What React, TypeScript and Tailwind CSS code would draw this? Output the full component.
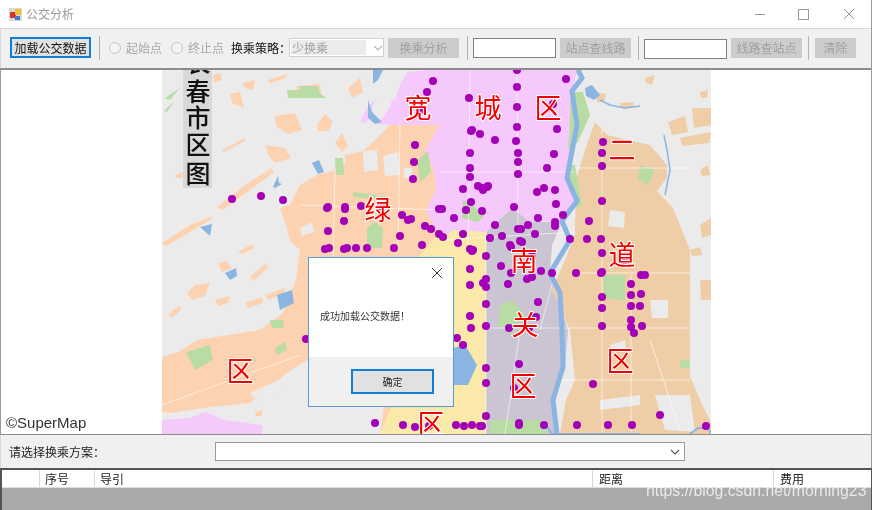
const dots: [number, number][] = [
[433,81],[427,92],[420,110],[415,145],[414,162],[413,179],[232,199],[261,196],[283,200],[328,207],[327,208],[345,207],[345,209],[361,206],[381,206],[402,215],[408,220],[411,219],[425,226],[431,229],[439,234],[344,221],[328,231],[400,236],[422,245],[325,249],[329,248],[344,249],[347,248],[356,248],[367,248],[394,248],[439,209],
[517,70],[566,79],[517,87],[469,98],[517,107],[553,104],[517,127],[557,129],[472,130],[471,131],[480,134],[495,140],[516,141],[603,142],[602,153],[602,166],[470,153],[518,153],[554,154],[518,162],[470,168],[547,168],[470,177],[518,174],[463,189],[478,186],[482,188],[483,190],[487,187],[488,186],[537,192],[544,188],[555,190],[556,204],[602,201],[471,202],[466,210],[482,211],[442,209],[454,218],[514,207],[538,218],[563,215],[555,222],[555,226],[589,221],[495,225],[528,225],[518,229],[521,229],[463,234],[535,234],[443,237],[490,238],[502,236],[570,239],[587,239],[601,239],[458,243],[520,241],[522,242],[510,245],[511,247],[470,249],[473,250],[602,253],[486,256],[532,256],
[472,251],[625,262],[501,266],[470,269],[511,273],[541,271],[552,273],[576,273],[602,272],[601,273],[641,275],[645,275],[532,277],[527,279],[486,279],[483,283],[486,287],[470,285],[508,284],[631,284],[641,294],[631,295],[602,297],[538,302],[486,304],[631,306],[640,306],[602,308],[470,316],[536,317],[631,320],[631,327],[642,326],[634,333],[602,326],[486,326],[471,328],[509,328],[529,328],[457,338],[463,345],[519,364],[486,368],[486,383],[593,384],[514,388],[486,416],[660,415],[456,425],[464,426],[472,425],[480,426],[482,426],[519,425],[519,423],[544,425],[577,425],[608,425],[632,425],[706,426],[306,339],[375,423],[403,425],[415,427],[429,426],
];

const orange = [
"162,357 178,352 197,340 260,330 283,313 296,280 300,250 290,241 286,225 280,208 290,205 300,185 317,175 333,171 345,165 345,155 363,151 375,140 390,125 445,125 448,434 380,434 385,400 340,375 307,360 287,373 250,403 210,407 170,413 162,412",
"213,75 220,73 222,80 214,82","242,83 255,80 253,90 245,88","230,94 240,92 244,108 232,103","268,80 287,74 286,78 270,83","297,86 320,84 322,98 297,95","348,88 360,78 363,92 352,98","275,116 295,113 302,130 288,134 276,126","317,125 325,114 333,122 328,131 318,131","222,150 245,138 245,141 224,152","265,145 285,148 291,158 275,163 268,155","335,143 342,133 348,146 342,152","217,207 245,185 272,168 274,172 250,190 222,210","162,243 190,225 213,216 210,220 190,232 166,246","238,252 252,244 254,248 242,254","175,175 183,172 182,178 176,178",
"250,277 266,263 268,267 254,281","187,293 195,285 210,283 205,296 192,300","218,263 227,261 232,268 222,272","215,300 230,296 228,303 218,306","245,303 262,297 263,303 248,308","168,315 180,305 181,310 172,318","265,295 285,288 285,293 268,300",
"255,412 262,410 262,416 256,416",
];
const holes = ["363,151 377,150 378,170 364,172","383,156 398,152 400,175 385,176","404,168 412,168 412,178 404,178","250,393 283,378 287,385 258,403","300,228 312,222 314,232 302,236","316,350 330,345 334,352 320,358"];
const tan = [
"595,122 607,135 650,145 667,165 667,178 657,191 673,208 690,250 690,376 713,425 711,434 560,434 566,400 575,380 570,330 552,290 565,260 575,235 576,180 585,150",
"645,78 655,75 652,85 646,83","668,122 685,116 688,132 672,135","692,108 711,108 711,125 694,128","680,138 711,132 709,143 682,146","700,92 708,90 707,98 701,98","596,92 606,94 604,102 597,102","620,103 634,102 633,107 621,107","700,225 711,218 711,235 702,238","700,170 708,165 710,175 702,176","690,250 700,247 702,255 692,256","700,280 711,280 711,300 701,300",
];
const tanHoles = ["610,210 625,212 624,228 608,226","650,300 668,300 668,318 652,318","610,345 625,340 626,350 612,352","690,376 712,376 712,425 700,400","600,400 640,395 640,405 600,410","655,395 690,395 695,432 665,430"];

const roads = ["300,205 445,210","335,170 332,300","400,125 398,250","162,405 300,355","440,172 575,172","470,69 468,250","517,69 518,230","445,240 575,232","575,168 690,168","602,130 602,434","575,273 690,273","631,275 631,434","486,230 486,434","486,328 565,328","565,328 690,328","520,330 505,434","555,273 540,330","560,380 690,380","650,340 680,430"];

const labels: [string, number, number][] = [["宽",418,118],["城",488,118],["区",548,118],["二",622,160],["绿",378,220],["道",622,265],["南",524,271],["关",525,335],["区",620,371],["区",240,381],["区",523,396],["区",431,434]];

function Btn({ w, children }: { w: string; children: string }) {
  return <div className={`h-[20px] bg-[#cccccc] text-[#a0a0a0] whitespace-nowrap flex items-center justify-center ${w}`}>{children}</div>;
}
const Sep = () => <div className="w-px h-[24px] bg-[#b4b4b4]" />;
const Radio = () => <div className="w-[12px] h-[12px] rounded-full border border-[#c4c4c4] bg-[#f4f4f4]" />;
const Chev = ({ c }: { c: string }) => (
  <svg width="10" height="6" viewBox="0 0 10 6" fill="none" stroke={c} strokeWidth="1.1"><path d="M1 1l4 4 4-4" /></svg>
);

export default function App() {
  return (
    <div className="relative w-[876px] h-[510px] overflow-hidden bg-white text-[12px] leading-none text-[#222222] blur-[0.35px] font-['Noto_Sans_CJK_SC','Liberation_Sans',sans-serif]">
      <div className="w-[872px] h-[510px] flex flex-col border-r border-[#9a9a9a] bg-[#f0f0f0]">
        <div className="h-[29px] bg-white border-b border-[#d9d9d9] flex items-center pl-[9px] shrink-0">
          <svg width="13" height="13" viewBox="0 0 13 13">
            <rect width="13" height="13" fill="#d8d8d8" />
            <rect x="1" y="4" width="6" height="6" fill="#d9322e" />
            <rect x="6" y="1" width="6" height="6" fill="#f2c230" />
            <rect x="6" y="8" width="5" height="4" fill="#3f78d8" />
          </svg>
          <span className="ml-[4px] text-[#999999] whitespace-nowrap">公交分析</span>
          <svg className="ml-[681px]" width="100" height="12" viewBox="0 0 100 12" fill="none" stroke="#9a9a9a" strokeWidth="1">
            <path d="M0 6.5h10" />
            <rect x="43.5" y="1.5" width="10" height="10" />
            <path d="M89 1l10 10M99 1L89 11" />
          </svg>
        </div>

        <div className="h-[39px] flex items-center pl-[10px] pb-[2px] shrink-0 border-l border-[#d9d9d9]">
          <div className="w-[81px] h-[21px] border-2 border-[#0f7fd8] bg-[#e1e1e1] whitespace-nowrap flex items-center justify-center text-[#111111] -ml-px">加载公交数据</div>
          <div className="ml-[8px]"><Sep /></div>
          <div className="ml-[9px]"><Radio /></div>
          <span className="ml-[5px] w-[36px] whitespace-nowrap text-[#a8a8a8]">起始点</span>
          <div className="ml-[9px]"><Radio /></div>
          <span className="ml-[5px] w-[36px] whitespace-nowrap text-[#a8a8a8]">终止点</span>
          <span className="ml-[7px] w-[58px] whitespace-nowrap text-[#111111]">换乘策略：</span>
          <div className="w-[95px] h-[19px] bg-white border border-[#d0d0d0] flex items-center pl-px">
            <div className="w-[75px] h-[15px] bg-[#ececec] text-[#a0a0a0] whitespace-nowrap flex items-center pl-px">少换乘</div>
            <div className="ml-[7px]"><Chev c="#b0b0b0" /></div>
          </div>
          <div className="ml-[4px]"><Btn w="w-[71px]">换乘分析</Btn></div>
          <div className="ml-[8px]"><Sep /></div>
          <div className="ml-[5px] w-[83px] h-[20px] bg-white border border-[#808080]" />
          <div className="ml-[4px]"><Btn w="w-[71px]">站点查线路</Btn></div>
          <div className="ml-[7px]"><Sep /></div>
          <div className="ml-[5px] w-[83px] h-[20px] mt-[2px] bg-white border border-[#808080]" />
          <div className="ml-[4px]"><Btn w="w-[71px]">线路查站点</Btn></div>
          <div className="ml-[6px]"><Sep /></div>
          <div className="ml-[6px]"><Btn w="w-[41px]">清除</Btn></div>
        </div>

        <div className="relative h-[367px] shrink-0 bg-white border-t-2 border-b border-l border-t-[#8c8c8c] border-b-[#8c8c8c] border-l-[#9a9a9a] pl-[161px] overflow-hidden">
          <svg width="549" height="364" viewBox="162 70 549 364" className="block font-['Noto_Sans_CJK_SC',sans-serif]">
            <rect x="162" y="70" width="549" height="364" fill="#ebebeb" />
            {orange.map((p) => <polygon key={p} points={p} fill="#fdd2b0" />)}
            {holes.map((p) => <polygon key={p} points={p} fill="#ebebeb" />)}
            <polygon points="380,434 392,405 420,385 425,300 420,255 440,232 453,230 486,232 490,434" fill="#fae9a8" />
            <polygon points="162,420 190,418 205,412 225,420 262,425 262,434 162,434" fill="#f5c9fa" />
            <polygon points="360,122 366,110 373,101 395,100 400,85 407,72 440,69 578,69 572,91 577,125 572,151 567,178 577,201 562,221 530,222 512,208 486,232 453,230 440,240 426,210 436,190 434,170 425,150 440,125 392,125" fill="#f5c9fb" />
            <polygon points="375,100 384,95 392,103 384,116 378,122 366,124" fill="#ebebeb" />
            <polygon points="486,232 512,208 530,222 562,222 552,245 550,273 568,330 565,370 552,400 556,434 486,434" fill="#cbc4d2" />
            {tan.map((p) => <polygon key={p} points={p} fill="#efcda6" />)}
            {tanHoles.map((p) => <polygon key={p} points={p} fill="#ebebeb" />)}
            <polygon points="490,420 547,420 547,434 490,434" fill="#b8dca4" />
            <polygon points="165,98 180,88 170,100" fill="#b8dca4" />
            <polygon points="164,111 174,101 167,112" fill="#b8dca4" />
            <polygon points="287,90 300,90 300,86 318,86 320,94 327,98 288,98" fill="#b8dca4" />
            <polygon points="335,158 343,158 344,175 336,175" fill="#b8dca4" />
            <polygon points="367,228 375,222 383,228 382,248 367,248" fill="#b8dca4" />
            <polygon points="353,192 377,195 376,199 353,197" fill="#b8dca4" />
            <polygon points="417,160 428,151 431,172 420,182" fill="#b8dca4" />
            <polygon points="186,352 210,345 213,360 195,370" fill="#b8dca4" />
            <polygon points="275,348 285,342 287,350 277,355" fill="#b8dca4" />
            <polygon points="270,320 284,320 283,328 272,328" fill="#b8dca4" />
            <polygon points="570,92 583,92 590,115 578,142 568,150 570,125" fill="#b8dca4" />
            <polygon points="566,165 575,165 582,205 576,208" fill="#b8dca4" />
            <polygon points="640,165 655,170 648,185 638,178" fill="#b8dca4" />
            <polygon points="603,275 625,275 625,300 604,298" fill="#b8dca4" />
            <polygon points="680,360 690,360 690,368 680,368" fill="#b8dca4" />
            <polygon points="500,305 512,300 525,315 512,335 498,325" fill="#b8dca4" />
            <polygon points="463,200 470,204 485,215 478,222 462,218" fill="#b8dca4" />
            {roads.map((p) => <polyline key={p} points={p} fill="none" stroke="#ffffff" strokeOpacity="0.6" strokeWidth="1" />)}
            <polyline points="578,70 582,78 572,91 577,125 572,151 567,178 577,201 562,221 570,240 550,273 560,293 562,330 563,367 553,400 557,434" fill="none" stroke="#8ab4e2" strokeWidth="5" />
            <polygon points="585,88 592,85 600,95 594,100 586,96" fill="#8ab4e2" />
            <polyline points="600,100 610,105 625,108 640,106" fill="none" stroke="#8ab4e2" strokeWidth="1.5" />
            <polyline points="664,135 667,150 670,170 665,195" fill="none" stroke="#8ab4e2" strokeWidth="1.5" />
            <polygon points="200,227 212,224 210,236" fill="#8ab4e2" />
            <polygon points="312,163 319,160 324,172 318,174" fill="#8ab4e2" />
            <polygon points="373,70 383,70 378,80 373,84" fill="#8ab4e2" />
            <polygon points="368,100 372,112 382,122 375,124 368,118" fill="#8ab4e2" />
            <polygon points="273,187 278,176 279,183 282,184 275,188" fill="#8ab4e2" />
            <polygon points="225,273 236,268 237,276 230,280" fill="#8ab4e2" />
            <polygon points="277,295 292,290 294,303 280,310" fill="#8ab4e2" />
            <polygon points="453,348 465,345 477,365 468,385 454,385" fill="#8ab4e2" />
            <polyline points="546,425 552,434 640,434" fill="none" stroke="#8ab4e2" strokeWidth="2" />
            <polyline points="690,434 698,428 708,428 711,434" fill="none" stroke="#8ab4e2" strokeWidth="2" />
            {dots.map(([x, y], i) => <circle key={i} cx={x} cy={y} r="4" fill="#a400b8" />)}
            {labels.map(([t, x, y], i) => (
              <text key={i} x={x} y={y} textAnchor="middle" fontSize="27" fill="#f00000" stroke="#ffffff" strokeWidth="2" paintOrder="stroke">{t}</text>
            ))}
            <rect x="183" y="70" width="29" height="118" fill="#d8d8d8" />
            {([["长",72],["春",101],["市",127],["区",154],["图",183]] as [string, number][]).map(([t, y]) => (
              <text key={t} x="198" y={y} textAnchor="middle" fontSize="25" fontWeight="500" fill="#111111">{t}</text>
            ))}
          </svg>
          <span className="absolute left-[5px] bottom-[2px] text-[15px] leading-[18px] text-[#333333] font-['Liberation_Sans',sans-serif]">©SuperMap</span>
        </div>

        <div className="h-[33px] shrink-0 flex items-center pl-[8px] border-l border-[#d9d9d9]">
          <span className="w-[206px] whitespace-nowrap text-[#222222]">请选择换乘方案：</span>
          <div className="w-[470px] h-[19px] bg-white border border-[#9a9a9a] flex items-center justify-end pr-[4px]">
            <Chev c="#555555" />
          </div>
        </div>

        <div className="flex-1 border-t-2 border-l-2 border-[#555555] flex flex-col bg-[#a9a9a9]">
          <div className="h-[18px] bg-white flex items-center border-b border-[#dddddd] shrink-0">
            <div className="w-[38px] h-full border-r border-[#d8d8d8]" />
            <div className="w-[55px] h-full border-r border-[#d8d8d8] pl-[5px] flex items-center">序号</div>
            <div className="w-[498px] h-full border-r border-[#d8d8d8] pl-[5px] flex items-center">导引</div>
            <div className="w-[181px] h-full border-r border-[#d8d8d8] pl-[6px] flex items-center">距离</div>
            <div className="pl-[6px]">费用</div>
          </div>
        </div>
      </div>
      <div className="absolute left-[871px] top-[468px] h-[42px] w-px bg-[#555555]" />

      <div className="absolute left-[308px] top-[257px] w-[146px] h-[150px] border border-[#5b9bd5] bg-white flex flex-col">
        <div className="h-[99px] flex flex-col">
          <div className="flex justify-end pr-[10px] pt-[9px]">
            <svg width="12" height="12" viewBox="0 0 12 12" fill="none" stroke="#333333" strokeWidth="1"><path d="M1 1l10 10M11 1L1 11" /></svg>
          </div>
          <div className="pl-[11px] mt-[32px] text-[10px] text-[#333333] whitespace-nowrap">成功加载公交数据！</div>
        </div>
        <div className="flex-1 bg-[#f0f0f0] flex items-start pl-[42px] pt-[12px]">
          <div className="w-[83px] h-[25px] border-2 border-[#0f7fd8] bg-[#e1e1e1] flex items-center justify-center text-[10px] text-[#222222]">确定</div>
        </div>
      </div>

      <div className="absolute left-[646px] top-[482px] text-[15.8px] leading-[18px] text-white/75 whitespace-nowrap font-['Liberation_Sans',sans-serif]">https://blog.csdn.net/morning23</div>
    </div>
  );
}
